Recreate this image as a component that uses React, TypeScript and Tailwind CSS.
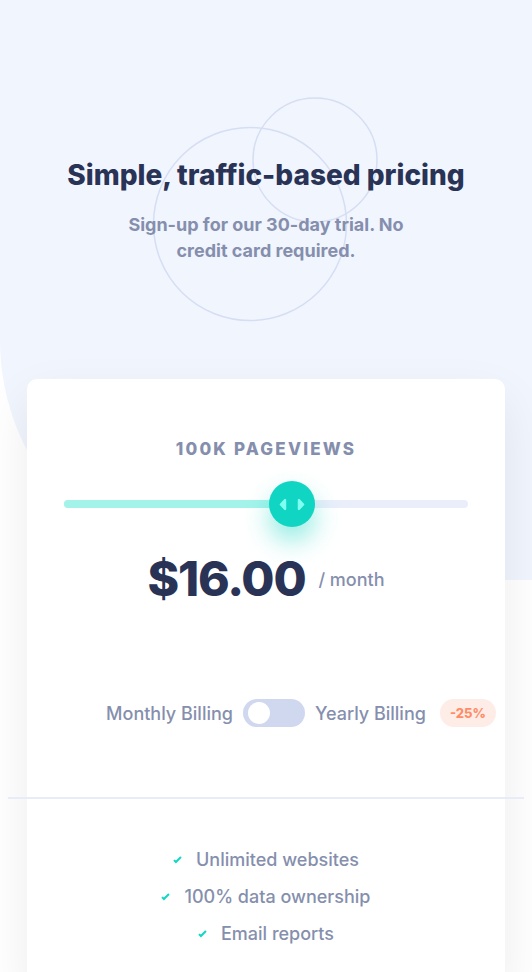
import React, { useState } from 'react';

const features = ['Unlimited websites', '100% data ownership', 'Email reports'];

function CheckIcon() {
  return (
    <svg width="9" height="8" viewBox="0 0 9 8" className="shrink-0">
      <path fill="none" stroke="#10D8C4" strokeWidth="2" d="M1 4.134l1.907 1.908L7.949 1" />
    </svg>
  );
}

function SliderArrows() {
  return (
    <svg width="26" height="15" viewBox="0 0 22 13">
      <g fill="#80FFF3" fillRule="evenodd">
        <path d="M16 2.558v7.884a1 1 0 001.735.679l3.639-3.943a1 1 0 000-1.356l-3.64-3.943A1 1 0 0016 2.558zM6 2.558v7.884a1 1 0 01-1.735.679L.626 7.178a1 1 0 010-1.356l3.64-3.943A1 1 0 016 2.558z" />
      </g>
    </svg>
  );
}

export default function App() {
  const [yearly, setYearly] = useState(false);
  const progress = 56.4;

  return (
    <div className="min-h-screen bg-white font-['Inter',sans-serif] overflow-hidden">
      <header className="relative h-[580px] rounded-bl-[240px] bg-[#f1f5fe] pt-[157px] text-center">
        <svg
          className="pointer-events-none absolute left-0 top-0"
          width="532"
          height="340"
          viewBox="0 0 532 340"
        >
          <circle cx="250" cy="224" r="96.5" fill="none" stroke="#d6def3" strokeWidth="1.5" />
          <circle cx="315" cy="160" r="62" fill="none" stroke="#d6def3" strokeWidth="1.5" />
        </svg>
        <h1 className="relative text-[28px] font-extrabold leading-9 text-[#293356]">
          Simple, traffic-based pricing
        </h1>
        <p className="relative mx-auto mt-[19px] max-w-[300px] text-[18px] font-bold leading-[26px] text-[#858fad]">
          Sign-up for our 30-day trial. No credit card required.
        </p>
      </header>

      <main className="relative mx-[27px] -mt-[201px] rounded-[10px] bg-white pb-10 shadow-[0_20px_50px_rgba(0,0,0,0.08)]">
        <div className="px-[37px] pt-[58px]">
          <p className="text-center text-[17px] font-extrabold uppercase leading-6 tracking-[2.2px] text-[#858fad]">
            100K Pageviews
          </p>

          <div className="relative mt-[39px] h-2 rounded-full bg-[#eaeefb]">
            <div className="h-2 rounded-full bg-[#a4f3eb]" style={{ width: `${progress}%` }} />
            <button
              type="button"
              aria-label="Pageviews slider"
              className="absolute top-1/2 flex h-[46px] w-[46px] -translate-x-1/2 -translate-y-1/2 items-center justify-center rounded-full bg-[#10d5c2] shadow-[0_14px_26px_rgba(16,213,194,0.45)]"
              style={{ left: `${progress}%` }}
            >
              <SliderArrows />
            </button>
          </div>

          <div className="mt-[43px] flex items-center justify-center gap-[13px]">
            <span className="text-[48px] font-extrabold leading-[56px] tracking-tight text-[#293356]">$16.00</span>
            <span className="text-[18px] font-medium text-[#858fad]">/ month</span>
          </div>

          <div className="mt-[92px] flex items-center justify-center gap-[10px] text-[18px] font-medium text-[#858fad]">
            <span>Monthly Billing</span>
            <button
              type="button"
              aria-label="Toggle billing"
              onClick={() => setYearly((y) => !y)}
              className={`flex h-7 w-[62px] items-center rounded-full px-[5px] ${yearly ? 'justify-end bg-[#10d5c2]' : 'justify-start bg-[#cfd8ef]'}`}
            >
              <span className="h-[22px] w-[22px] rounded-full bg-white" />
            </button>
            <span className="relative">
              Yearly Billing
              <span className="absolute left-full top-1/2 ml-[14px] -translate-y-1/2 rounded-full bg-[#feece7] px-[10px] py-[4px] text-[13px] font-extrabold leading-5 text-[#ff8c66]">
                -25%
              </span>
            </span>
          </div>
        </div>

        <div className="-mx-[19px] mt-[70px] h-[2px] bg-[#e8ecf8]" />

        <ul className="mt-[49px] flex flex-col items-center gap-[13px] text-[18px] font-medium leading-6 text-[#858fad]">
          {features.map((f) => (
            <li key={f} className="flex items-center gap-[14px]">
              <CheckIcon />
              <span>{f}</span>
            </li>
          ))}
        </ul>
      </main>
    </div>
  );
}
